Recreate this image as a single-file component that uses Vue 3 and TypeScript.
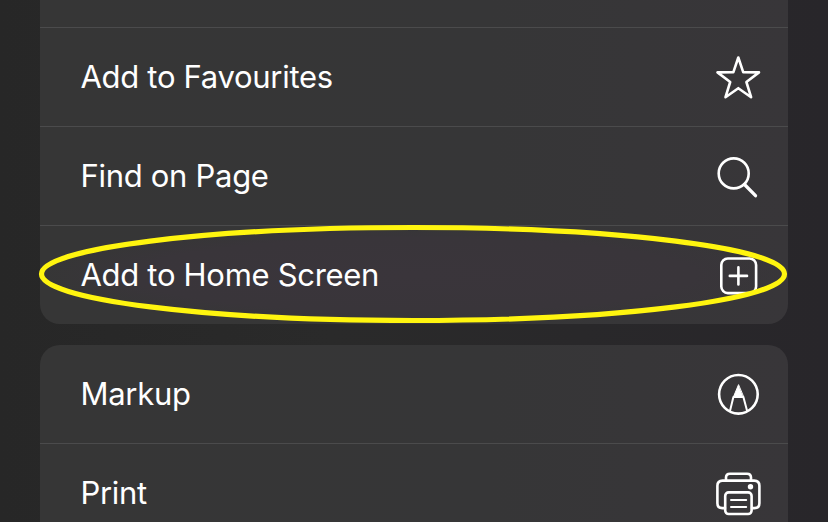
<script setup lang="ts">
type IconName = 'star' | 'search' | 'plus' | 'markup' | 'print'

interface Action {
  label: string
  icon: IconName
  highlighted?: boolean
}

const pageActions: Action[] = [
  { label: 'Add to Favourites', icon: 'star' },
  { label: 'Find on Page', icon: 'search' },
  { label: 'Add to Home Screen', icon: 'plus', highlighted: true },
]

const documentActions: Action[] = [
  { label: 'Markup', icon: 'markup' },
  { label: 'Print', icon: 'print' },
]

const groups: Action[][] = [pageActions, documentActions]
</script>

<template>
  <main class="sheet">
    <ul v-for="(group, index) in groups" :key="index" class="group" :class="{ continued: index === 0 }">
      <li v-for="action in group" :key="action.label" class="row" :class="{ tinted: action.highlighted }">
        <span class="label">{{ action.label }}</span>
        <svg class="icon" viewBox="0 0 48 48" aria-hidden="true">
          <path
            v-if="action.icon === 'star'"
            d="M24.3 4.5 L29.2 19.2 L45 19.4 L32.4 29 L37.1 44.2 L24.3 35.2 L11.5 44.2 L16.2 29 L3.5 19.4 L19.4 19.2 Z"
          />
          <g v-else-if="action.icon === 'search'">
            <circle cx="19.7" cy="21.4" r="15" />
            <path class="handle" d="M30.5 32.5 L41.5 43.7" />
          </g>
          <g v-else-if="action.icon === 'plus'">
            <rect x="7.3" y="7.5" width="34.8" height="34.6" rx="6.5" />
            <path d="M24.4 16.4 V33.4 M15.8 24.9 H33" />
          </g>
          <g v-else-if="action.icon === 'markup'">
            <circle cx="24.4" cy="24.3" r="19.3" />
            <path class="thin" d="M16.1 40.5 L19.4 27 H29.4 L33 40.5" />
            <path class="solid" d="M24.4 15 L19.4 27 H29.4 Z" />
          </g>
          <g v-else transform="translate(0 0.8)">
            <path d="M12 10.5 V7.8 Q12 3.9 16 3.9 H33 Q37 3.9 37 7.8 V10.5" />
            <path d="M11 38.3 H8.3 Q3.4 38.3 3.4 33.4 V16 Q3.4 10.8 8.6 10.8 H40.2 Q45.4 10.8 45.4 16 V33.4 Q45.4 38.3 40.5 38.3 H38" />
            <rect x="11.2" y="22.6" width="26.4" height="21.6" rx="3.5" />
            <path class="thin" d="M17 30.2 H32.2 M17 37.2 H32.2" />
            <circle class="dot" cx="36.5" cy="17" r="2.7" />
          </g>
        </svg>
        <svg v-if="action.highlighted" class="ring" viewBox="0 0 750 100" aria-hidden="true">
          <ellipse cx="375" cy="50" rx="371.5" ry="46.5" />
        </svg>
      </li>
    </ul>
  </main>
</template>

<style>
body {
  background: #272728;
}
</style>

<style scoped>
.sheet {
  box-sizing: border-box;
  height: 522px;
  padding: 0 40px;
  overflow: hidden;
  display: flex;
  flex-direction: column;
  gap: 21px;
  background: linear-gradient(90deg, #272727 0%, #2a2a2a 40%, #28262a 100%);
  color: #fff;
  font-family: Inter, "Liberation Sans", sans-serif;
}

.group {
  flex: none;
  margin: 0;
  padding: 0;
  list-style: none;
  border-radius: 20px;
  background: linear-gradient(90deg, #363636, #363637 60%, #383639);
}

.group.continued {
  padding-top: 27px;
  border-radius: 0 0 20px 20px;
}

.row {
  box-sizing: border-box;
  position: relative;
  height: 99px;
  padding: 0 26px 0 40.5px;
  display: flex;
  align-items: center;
  justify-content: space-between;
}

.row + .row,
.continued .row {
  border-top: 1px solid #4b4b4c;
}

.group:not(.continued) .row:first-child {
  height: 98px;
}

.row.tinted {
  background: radial-gradient(ellipse 50% 50% at center, #3a353b 0%, #39353a 75%, transparent 100%);
}

.label {
  font-size: 31px;
  line-height: 40px;
  letter-spacing: -0.3px;
  white-space: nowrap;
}

.icon {
  flex: none;
  width: 48px;
  height: 48px;
  fill: none;
  stroke: #fff;
  stroke-width: 2.6;
  stroke-linecap: round;
  stroke-linejoin: round;
}

.handle {
  stroke-width: 3.3;
}

.thin {
  stroke-width: 2;
}

.solid {
  fill: #fff;
  stroke-width: 1;
}

.dot {
  fill: #fff;
  stroke: none;
}

.ring {
  position: absolute;
  left: -2px;
  top: -2px;
  width: 750px;
  height: 100px;
  fill: none;
  stroke: #fff50f;
  stroke-width: 5.2;
  pointer-events: none;
}
</style>
